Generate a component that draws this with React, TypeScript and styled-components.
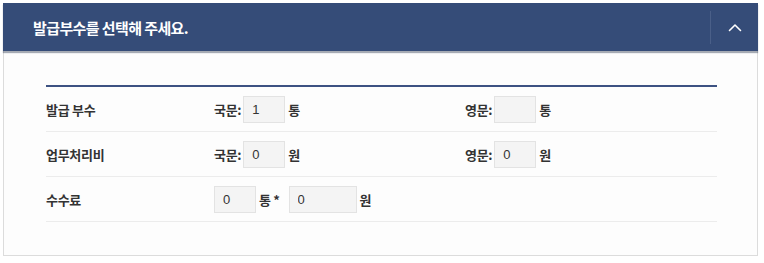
import styled, { createGlobalStyle } from "styled-components";

const GlobalStyle = createGlobalStyle`
  body {
    margin: 0;
    background: #ffffff;
    font-family: "Noto Sans CJK KR", "Noto Sans", sans-serif;
    color: #333333;
  }
`;

const Panel = styled.section`
  margin: 3px 0 0 3px;
  width: 755px;
  height: 253px;
  box-sizing: border-box;
  border: 1px solid #dcdcdc;
  border-top: none;
  background: #fdfdfd;
`;

const Header = styled.header`
  display: flex;
  align-items: center;
  height: 48px;
  background: #354c78;
  box-shadow: 0 2px 1px rgba(60, 70, 90, 0.45);
  padding-left: 30px;
  margin: 0 -1px;
`;

const Title = styled.h2`
  flex: 1;
  margin: 0;
  font-size: 15px;
  font-weight: 700;
  letter-spacing: -0.6px;
  color: #ffffff;
`;

const ToggleButton = styled.button`
  display: flex;
  align-items: center;
  justify-content: center;
  width: 48px;
  height: 33px;
  padding: 0;
  border: none;
  border-left: 1px solid #4a5f88;
  background: transparent;
  cursor: pointer;
`;

const Body = styled.div`
  padding: 34px 40px 0 42px;
`;

const Table = styled.div`
  border-top: 2px solid #3d5282;
`;

const Row = styled.div`
  display: grid;
  grid-template-columns: 168px 251px 1fr;
  align-items: center;
  height: 44px;
  border-bottom: 1px solid #ececec;
`;

const Label = styled.div`
  font-size: 13px;
  font-weight: 700;
  color: #333333;
  letter-spacing: -0.3px;
`;

const Field = styled.div`
  display: flex;
  align-items: center;
  font-size: 13px;
  font-weight: 700;
  color: #333333;
  letter-spacing: -0.3px;
`;

const Prefix = styled.span`
  margin-right: 2px;
`;

const Unit = styled.span`
  margin-left: 3px;
`;

const Input = styled.input<{ $wide?: boolean }>`
  box-sizing: border-box;
  width: ${({ $wide }) => ($wide ? "68px" : "42px")};
  height: 27px;
  margin-left: ${({ $wide }) => ($wide ? "9px" : "0")};
  padding: 0 8px;
  border: 1px solid #e3e3e3;
  background: #f4f4f4;
  font-family: "Liberation Sans", Arial, sans-serif;
  font-size: 13px;
  color: #333333;
  outline: none;
`;

function Chevron() {
  return (
    <svg width="14" height="9" viewBox="0 0 14 9" fill="none">
      <polyline
        points="1.5,7.5 7,2 12.5,7.5"
        stroke="#ffffff"
        strokeWidth="1.6"
        strokeLinecap="round"
        strokeLinejoin="round"
      />
    </svg>
  );
}

export default function App() {
  return (
    <>
      <GlobalStyle />
      <Panel>
        <Header>
          <Title>발급부수를 선택해 주세요.</Title>
          <ToggleButton aria-label="접기">
            <Chevron />
          </ToggleButton>
        </Header>
        <Body>
          <Table>
            <Row>
              <Label>발급 부수</Label>
              <Field>
                <Prefix>국문:</Prefix>
                <Input defaultValue="1" />
                <Unit>통</Unit>
              </Field>
              <Field>
                <Prefix>영문:</Prefix>
                <Input defaultValue="" />
                <Unit>통</Unit>
              </Field>
            </Row>
            <Row>
              <Label>업무처리비</Label>
              <Field>
                <Prefix>국문:</Prefix>
                <Input defaultValue="0" />
                <Unit>원</Unit>
              </Field>
              <Field>
                <Prefix>영문:</Prefix>
                <Input defaultValue="0" />
                <Unit>원</Unit>
              </Field>
            </Row>
            <Row>
              <Label>수수료</Label>
              <Field>
                <Input defaultValue="0" />
                <Unit>통 *</Unit>
                <Input $wide defaultValue="0" />
                <Unit>원</Unit>
              </Field>
              <div />
            </Row>
          </Table>
        </Body>
      </Panel>
    </>
  );
}
